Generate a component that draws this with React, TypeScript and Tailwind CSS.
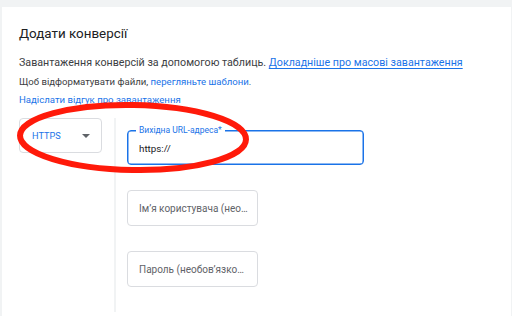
import type { ReactNode } from "react";

function OutlinedField({ children, className = "" }: { children: ReactNode; className?: string }) {
  return (
    <div
      className={`flex items-center rounded-[4px] border border-[#dadce0] pl-[11px] text-[10px] text-[#5f6368] ${className}`}
    >
      {children}
    </div>
  );
}

export default function App() {
  return (
    <div
      className="relative h-[316px] w-[512px] overflow-hidden bg-[#f1f3f4] pl-[2px] pr-px pt-[7px]"
      style={{ fontFamily: "Roboto, 'Noto Sans', sans-serif" }}
    >
      <div className="h-full bg-white pl-[17px] pt-[18px]">
        <h1 className="text-[13.4px] leading-[18px] text-[#202124]">Додати конверсії</h1>

        <div className="mt-[11px] text-[10.7px] leading-[18px] text-[#3c4043]">
          Завантаження конверсій за допомогою таблиць.{" "}
          <a className="text-[#1a73e8] underline underline-offset-2">Докладніше про масові завантаження</a>
        </div>
        <div className="mt-px text-[9.6px] leading-[18px] text-[#3c4043]">
          Щоб відформатувати файли, <a className="text-[#1a73e8]">перегляньте шаблони</a>.
        </div>
        <div className="text-[9.6px] leading-[18px] text-[#1a73e8]">Надіслати відгук про завантаження</div>

        <div className="mt-[9px] flex h-full">
          <div className="flex h-[35px] w-[83px] items-center justify-between rounded-[4px] border border-[#dadce0] pl-[12px] pr-[11px] text-[9.2px] text-[#1a73e8]">
            <span>HTTPS</span>
            <svg width="8" height="4" viewBox="0 0 8 4">
              <path d="M0 0 L8 0 L4 4 Z" fill="#5f6368" />
            </svg>
          </div>

          <div className="ml-[12px] h-[194px] w-[2px] bg-[#f1f3f4]" />

          <div className="ml-[11px] flex flex-col pt-[12px]">
            <div className="relative flex h-[35px] w-[237px] items-center rounded-[4px] border border-[#1a73e8] pl-[11px] text-[9.8px] text-[#202124] shadow-[inset_0_0_0_0.5px_#1a73e8]">
              <span className="absolute left-[8px] top-[-6px] bg-white px-[3px] text-[8.5px] leading-[10px] text-[#1a73e8]">
                Вихідна URL-адреса*
              </span>
              <span className="pt-[3px]">https://</span>
            </div>

            <OutlinedField className="mt-[25px] h-[36px] w-[131px]">Ім’я користувача (нео…</OutlinedField>
            <OutlinedField className="mt-[25px] h-[36px] w-[131px]">Пароль (необов’язко…</OutlinedField>
          </div>
        </div>
      </div>

      <svg className="pointer-events-none absolute left-0 top-0" width="512" height="316" viewBox="0 0 512 316">
        <ellipse
          cx="133"
          cy="137.5"
          rx="113"
          ry="32.5"
          transform="rotate(1 133 137.5)"
          fill="none"
          stroke="#ff1a0a"
          strokeWidth="6"
        />
      </svg>
    </div>
  );
}
